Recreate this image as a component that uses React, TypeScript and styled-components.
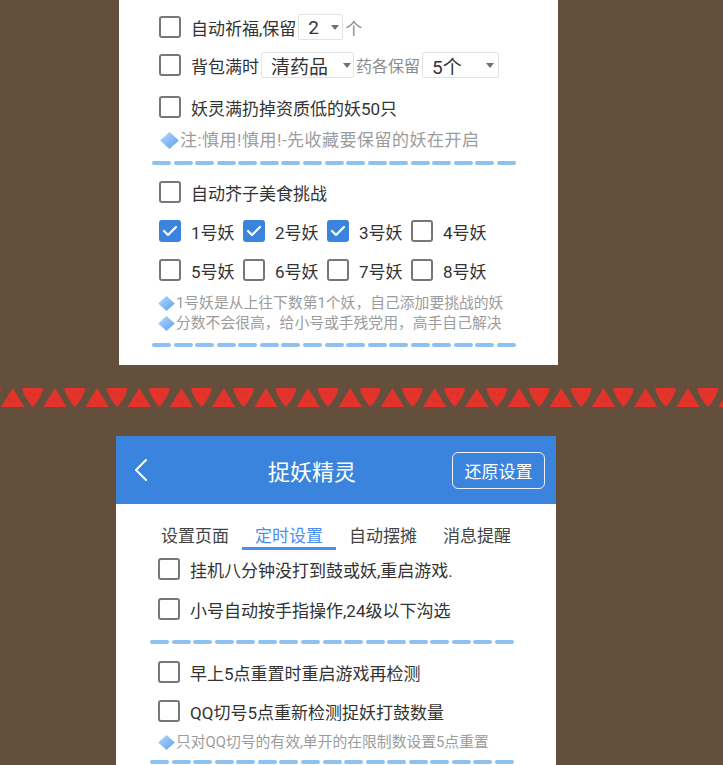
import React from 'react';
import styled, { createGlobalStyle } from 'styled-components';

const GlobalStyle = createGlobalStyle`
  html, body { margin: 0; padding: 0; background: #634f3c; overflow: hidden; }
  body { font-family: Roboto, "Noto Sans CJK SC", "Noto Sans", sans-serif; }
  * { box-sizing: border-box; }
`;

const Page = styled.div`
  width: 723px;
  height: 765px;
  overflow: hidden;
  display: flex;
  flex-direction: column;
`;

const Panel = styled.section<{ $ml: number; $w: number; $pb?: number }>`
  margin-left: ${(p) => p.$ml}px;
  width: ${(p) => p.$w}px;
  background: #fff;
  display: flex;
  flex-direction: column;
  flex-shrink: 0;
  padding-bottom: ${(p) => p.$pb ?? 0}px;
`;

const Row = styled.div<{ $h?: number; $mt?: number; $ml?: number }>`
  display: flex;
  align-items: center;
  height: ${(p) => p.$h ?? 40}px;
  margin-top: ${(p) => p.$mt ?? 0}px;
  margin-left: ${(p) => p.$ml ?? 40}px;
  font-size: 17px;
  color: #333;
  white-space: nowrap;
`;

const Label = styled.span`
  margin-left: 10px;
`;

const GrayText = styled.span<{ $size?: number }>`
  color: #8c8c8c;
  font-size: ${(p) => p.$size ?? 16}px;
`;

const Box = styled.span<{ $checked?: boolean }>`
  width: 22px;
  height: 22px;
  flex-shrink: 0;
  border-radius: 3px;
  border: 2.5px solid ${(p) => (p.$checked ? '#3b84de' : '#777')};
  background: ${(p) => (p.$checked ? '#3b84de' : '#fff')};
  display: flex;
  align-items: center;
  justify-content: center;
`;

const Checkbox: React.FC<{ checked?: boolean }> = ({ checked }) => (
  <Box $checked={checked}>
    {checked && (
      <svg width="18" height="18" viewBox="0 0 18 18">
        <polyline points="3,9 7,13 15,5" fill="none" stroke="#fff" strokeWidth="2.2" strokeLinecap="round" strokeLinejoin="round" />
      </svg>
    )}
  </Box>
);

const Item = styled.div`
  width: 84px;
  display: flex;
  align-items: center;
`;

const SelectBox = styled.div<{ $w: number; $pr: number }>`
  width: ${(p) => p.$w}px;
  height: 26px;
  margin: 0 2px;
  border: 1px solid #e3e3e3;
  border-radius: 2px;
  display: flex;
  align-items: center;
  justify-content: space-between;
  padding-left: 9px;
  padding-right: ${(p) => p.$pr}px;
  font-size: 19px;
  color: #333;
`;

const Caret = styled.span`
  width: 0;
  height: 0;
  border-left: 4px solid transparent;
  border-right: 4px solid transparent;
  border-top: 5px solid #707070;
`;

const Select: React.FC<{ value: string; w: number; pr: number }> = ({ value, w, pr }) => (
  <SelectBox $w={w} $pr={pr}>
    <span>{value}</span>
    <Caret />
  </SelectBox>
);

const NoteBlock = styled.div<{ $mt?: number; $ml: number; $size: number; $lh: number; $ls?: number }>`
  margin-top: ${(p) => p.$mt ?? 0}px;
  margin-left: ${(p) => p.$ml}px;
  font-size: ${(p) => p.$size}px;
  line-height: ${(p) => p.$lh}px;
  letter-spacing: ${(p) => p.$ls ?? 0}px;
  color: #9c9c9c;
  white-space: nowrap;
`;

const NoteLine = styled.div`
  display: flex;
  align-items: center;
`;

const DiamondSvg = styled.svg`
  flex-shrink: 0;
  margin-right: 1px;
`;

const Diamond: React.FC<{ w: number; h: number }> = ({ w, h }) => (
  <DiamondSvg width={w} height={h} viewBox="0 0 20 18">
    <defs>
      <linearGradient id="dg" x1="0" y1="0" x2="1" y2="1">
        <stop offset="0" stopColor="#b5dafc" />
        <stop offset="1" stopColor="#5c9fec" />
      </linearGradient>
    </defs>
    <polygon points="10,0 20,9 10,18 0,9" fill="url(#dg)" />
  </DiamondSvg>
);

const DashRow = styled.div<{ $mt: number; $ml: number }>`
  margin-top: ${(p) => p.$mt}px;
  margin-left: ${(p) => p.$ml}px;
  width: 364px;
  height: 4px;
  display: flex;
  justify-content: space-between;
  flex-shrink: 0;
`;

const Dash = styled.span`
  width: 19px;
  height: 4px;
  border-radius: 2px;
  background: #8cc1f0;
`;

const Dashes: React.FC<{ mt: number; ml: number }> = ({ mt, ml }) => (
  <DashRow $mt={mt} $ml={ml}>
    {Array.from({ length: 17 }).map((_, i) => (
      <Dash key={i} />
    ))}
  </DashRow>
);

const Strip = styled.svg`
  display: block;
  flex-shrink: 0;
  margin-top: 23px;
  margin-bottom: 29px;
`;

const TriangleStrip: React.FC = () => (
  <Strip width="723" height="19" viewBox="0 0 723 19">
    <defs>
      <pattern id="tri" x="0.5" y="0" width="42.2" height="19" patternUnits="userSpaceOnUse">
        <path d="M0.6 19 L12.2 0 L23.8 19 Z" fill="#e3332a" />
        <path d="M21.6 0 L42.8 0 Q40.6 10 32.2 19 Q23.8 10 21.6 0 Z" fill="#e3332a" />
        <circle cx="10" cy="12" r="0.8" fill="#9c2a22" opacity="0.6" />
        <circle cx="14" cy="14" r="0.8" fill="#9c2a22" opacity="0.6" />
        <circle cx="30" cy="4" r="0.8" fill="#9c2a22" opacity="0.6" />
        <circle cx="35" cy="6" r="0.8" fill="#9c2a22" opacity="0.6" />
      </pattern>
    </defs>
    <rect x="0" y="0" width="723" height="19" fill="url(#tri)" />
  </Strip>
);

const Header = styled.header`
  height: 68px;
  background: #3a84de;
  display: flex;
  align-items: center;
  color: #fff;
`;

const BackButton = styled.div`
  width: 56px;
  padding-left: 18px;
  display: flex;
  align-items: center;
`;

const Title = styled.div`
  flex: 1;
  text-align: center;
  font-size: 22px;
`;

const ResetButton = styled.div`
  width: 93px;
  height: 37px;
  margin-right: 11px;
  border: 1.5px solid rgba(255, 255, 255, 0.9);
  border-radius: 6px;
  display: flex;
  align-items: center;
  justify-content: center;
  font-size: 17px;
`;

const TabBar = styled.nav`
  display: flex;
  margin-left: 32px;
  width: 376px;
`;

const Tab = styled.div<{ $active?: boolean }>`
  width: 94px;
  height: 46px;
  padding-top: 21px;
  line-height: 22px;
  text-align: center;
  font-size: 17px;
  color: ${(p) => (p.$active ? '#4a8ff0' : '#444')};
  border-bottom: 3px solid ${(p) => (p.$active ? '#4a8ef0' : 'transparent')};
`;

const CheckRow: React.FC<{ label: string; checked?: boolean; h?: number; mt?: number; ml?: number }> = ({ label, checked, h, mt, ml }) => (
  <Row $h={h} $mt={mt} $ml={ml}>
    <Checkbox checked={checked} />
    <Label>{label}</Label>
  </Row>
);

export default function App() {
  return (
    <Page>
      <GlobalStyle />
      <Panel $ml={119} $w={439} $pb={18}>
        <Row $h={38} $mt={8}>
          <Checkbox />
          <Label>自动祈福,保留</Label>
          <Select value="2" w={45} pr={3} />
          <GrayText $size={17}>个</GrayText>
        </Row>
        <Row $h={38}>
          <Checkbox />
          <Label>背包满时</Label>
          <Select value="清药品" w={93} pr={2} />
          <GrayText>药各保留</GrayText>
          <Select value="5个" w={77} pr={4} />
        </Row>
        <CheckRow label="妖灵满扔掉资质低的妖50只" mt={3} />
        <NoteBlock $mt={2} $ml={41} $size={17} $lh={22} $ls={0.5}>
          <NoteLine>
            <Diamond w={19} h={17} />
            注:慎用!慎用!-先收藏要保留的妖在开启
          </NoteLine>
        </NoteBlock>
        <Dashes mt={10} ml={33} />
        <CheckRow label="自动芥子美食挑战" mt={7} />
        <Row $mt={-1}>
          {['1号妖', '2号妖', '3号妖', '4号妖'].map((t, i) => (
            <Item key={t}>
              <Checkbox checked={i < 3} />
              <Label>{t}</Label>
            </Item>
          ))}
        </Row>
        <Row $mt={-1}>
          {['5号妖', '6号妖', '7号妖', '8号妖'].map((t) => (
            <Item key={t}>
              <Checkbox />
              <Label>{t}</Label>
            </Item>
          ))}
        </Row>
        <NoteBlock $mt={3} $ml={39} $size={14.8} $lh={20}>
          <NoteLine>
            <Diamond w={17} h={15} />
            1号妖是从上往下数第1个妖，自己添加要挑战的妖
          </NoteLine>
          <NoteLine>
            <Diamond w={17} h={15} />
            分数不会很高，给小号或手残党用，高手自己解决
          </NoteLine>
        </NoteBlock>
        <Dashes mt={10} ml={33} />
      </Panel>

      <TriangleStrip />

      <Panel $ml={116} $w={440} $pb={40}>
        <Header>
          <BackButton>
            <svg width="14" height="22" viewBox="0 0 14 22">
              <polyline points="12,1 2,11 12,21" fill="none" stroke="#fff" strokeWidth="2" strokeLinecap="round" strokeLinejoin="round" />
            </svg>
          </BackButton>
          <Title>捉妖精灵</Title>
          <ResetButton>还原设置</ResetButton>
        </Header>
        <TabBar>
          <Tab>设置页面</Tab>
          <Tab $active>定时设置</Tab>
          <Tab>自动摆摊</Tab>
          <Tab>消息提醒</Tab>
        </TabBar>
        <CheckRow label="挂机八分钟没打到鼓或妖,重启游戏." ml={42} mt={-1} />
        <CheckRow label="小号自动按手指操作,24级以下沟选" ml={42} />
        <Dashes mt={11} ml={34} />
        <CheckRow label="早上5点重置时重启游戏再检测" ml={42} mt={8} />
        <CheckRow label="QQ切号5点重新检测捉妖打鼓数量" ml={42} mt={-1} />
        <NoteBlock $ml={42} $mt={1} $size={14.8} $lh={20}>
          <NoteLine>
            <Diamond w={17} h={15} />
            只对QQ切号的有效,单开的在限制数设置5点重置
          </NoteLine>
        </NoteBlock>
        <Dashes mt={8} ml={34} />
      </Panel>
    </Page>
  );
}
